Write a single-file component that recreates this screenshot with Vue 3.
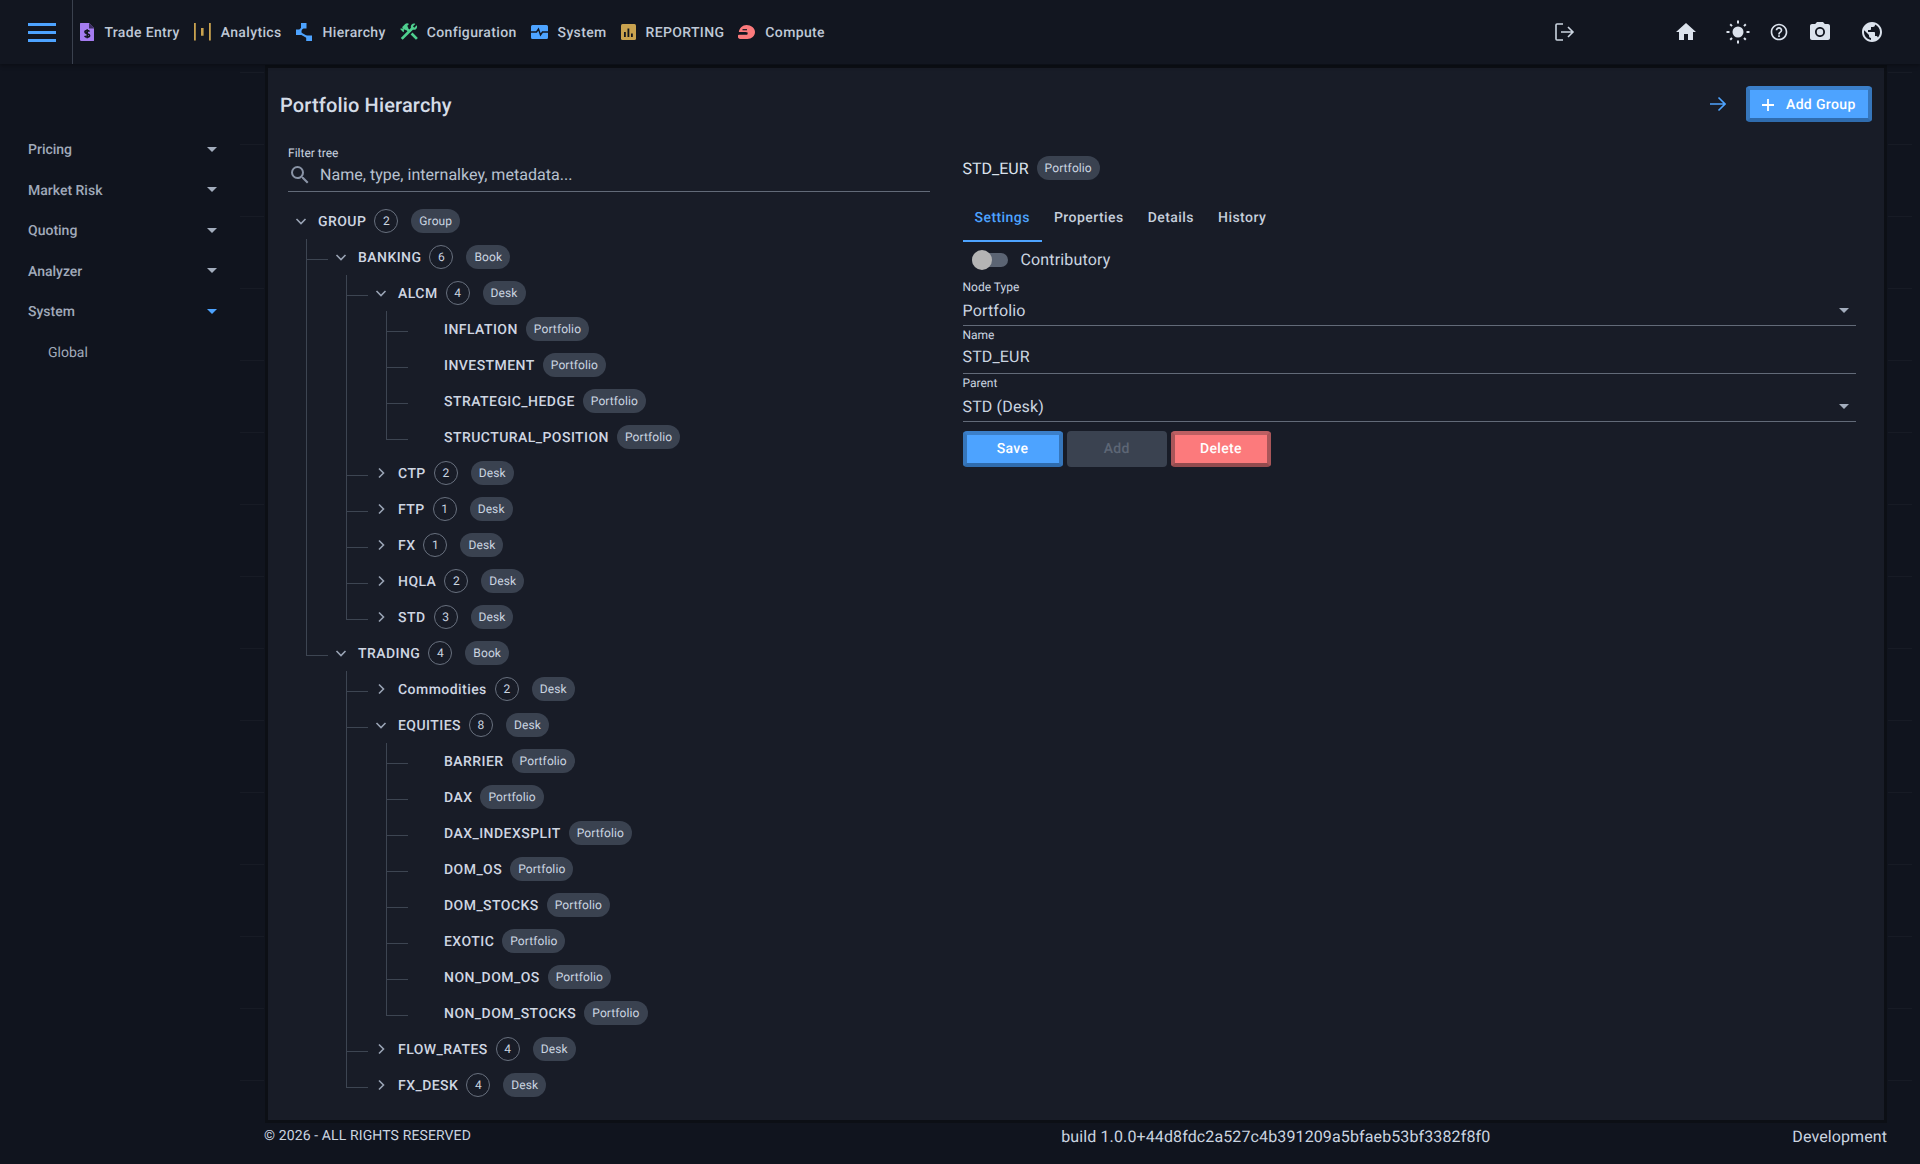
<script setup>
import { computed } from 'vue'

const navItems = [
  { label: 'Trade Entry', icon: 'trade' },
  { label: 'Analytics', icon: 'analytics' },
  { label: 'Hierarchy', icon: 'hierarchy' },
  { label: 'Configuration', icon: 'config' },
  { label: 'System', icon: 'system' },
  { label: 'REPORTING', icon: 'reporting' },
  { label: 'Compute', icon: 'compute' },
]

const sideItems = ['Pricing', 'Market Risk', 'Quoting', 'Analyzer', 'System']

const leaves = (names) => names.map((name) => ({ name, type: 'Portfolio' }))

const tree = {
  name: 'GROUP', count: 2, type: 'Group', open: true,
  children: [
    {
      name: 'BANKING', count: 6, type: 'Book', open: true,
      children: [
        {
          name: 'ALCM', count: 4, type: 'Desk', open: true,
          children: leaves(['INFLATION', 'INVESTMENT', 'STRATEGIC_HEDGE', 'STRUCTURAL_POSITION']),
        },
        { name: 'CTP', count: 2, type: 'Desk' },
        { name: 'FTP', count: 1, type: 'Desk' },
        { name: 'FX', count: 1, type: 'Desk' },
        { name: 'HQLA', count: 2, type: 'Desk' },
        { name: 'STD', count: 3, type: 'Desk' },
      ],
    },
    {
      name: 'TRADING', count: 4, type: 'Book', open: true,
      children: [
        { name: 'Commodities', count: 2, type: 'Desk' },
        {
          name: 'EQUITIES', count: 8, type: 'Desk', open: true,
          children: leaves(['BARRIER', 'DAX', 'DAX_INDEXSPLIT', 'DOM_OS', 'DOM_STOCKS', 'EXOTIC', 'NON_DOM_OS', 'NON_DOM_STOCKS']),
        },
        { name: 'FLOW_RATES', count: 4, type: 'Desk' },
        { name: 'FX_DESK', count: 4, type: 'Desk' },
      ],
    },
  ],
}

// flatten the tree, keeping track of which guide lines pass through each row
const rows = computed(() => {
  const out = []
  const walk = (node, depth, trail, isLast) => {
    out.push({ ...node, depth, trail, isLast })
    const kids = node.open ? node.children || [] : []
    kids.forEach((kid, i) => {
      const next = depth > 0 ? [...trail, { level: depth - 1, on: !isLast }] : trail
      walk(kid, depth + 1, next, i === kids.length - 1)
    })
  }
  walk(tree, 0, [], true)
  return out
})
</script>

<template>
  <div class="app">
    <header class="topbar">
      <button class="burger"><span></span><span></span><span></span></button>
      <nav class="nav">
        <a v-for="item in navItems" :key="item.label" class="nav-item">
          <svg v-if="item.icon === 'trade'" class="nav-icon" viewBox="4 2 16 20" width="14.400" height="18">
            <path fill="#a57cf0" d="M6 2h8l6 6v12.500A1.500 1.500 0 0 1 18.500 22h-13A1.500 1.500 0 0 1 4 20.500v-17A1.500 1.500 0 0 1 6 2z" />
            <path fill="#3d2f63" d="M14 2l6 6h-6z" />
            <path fill="none" stroke="#12161f" stroke-width="1.800" d="M14.500 11.500c-.5-.9-1.400-1.200-2.500-1.200-1.400 0-2.500.6-2.500 1.800 0 2.600 5.200 1.200 5.200 3.800 0 1.200-1.200 1.800-2.700 1.800-1.200 0-2.300-.5-2.800-1.400M12 9v10" />
          </svg>
          <svg v-else-if="item.icon === 'analytics'" class="nav-icon" viewBox="0 0 17 17.500" width="17" height="17.500">
            <path fill="#c9a24f" d="M0 0h1.800v17.500H0zM7 5h2.600v7.700H7zM15 0h1.800v17.500H15z" />
          </svg>
          <svg v-else-if="item.icon === 'hierarchy'" class="nav-icon nudge-right" viewBox="0 0 16 18" width="16" height="18">
            <path fill="none" stroke="#4da3ff" stroke-width="2" d="M8 3L2.500 9.200l10.500 6" />
            <path fill="#4da3ff" d="M5 0h5.500v5.500H5zM0 6.500h5.500V12H0zM10.200 12.500H16V18h-5.800z" />
          </svg>
          <svg v-else-if="item.icon === 'config'" class="nav-icon nudge-left" viewBox="2 2.500 20 19.500" width="18" height="17.500">
            <path fill="#4fd08f" d="M13.780 15.300L19.780 21.300L21.890 19.140L15.890 13.140L13.780 15.300M17.500 10.100C17.110 10.100 16.690 10.050 16.360 9.910L4.970 21.250L2.860 19.140L10.270 11.740L8.500 9.960L7.780 10.660L6.330 9.250V12.110L5.630 12.810L2.110 9.250L2.810 8.550H5.620L4.220 7.140L7.780 3.580C8.950 2.410 10.830 2.410 12 3.580L9.890 5.740L11.300 7.140L10.590 7.850L12.380 9.630L14.200 7.750C14.060 7.420 14 7 14 6.630C14 4.660 15.560 3.110 17.500 3.110C18.090 3.110 18.610 3.250 19.080 3.530L16.410 6.200L17.910 7.700L20.580 5.030C20.860 5.500 21 6 21 6.630C21 8.590 19.450 10.100 17.500 10.100Z" />
          </svg>
          <svg v-else-if="item.icon === 'system'" class="nav-icon" viewBox="0 0 17 14" width="17" height="14">
            <path fill="#4da3ff" d="M1.500 0h14A1.500 1.500 0 0 1 17 1.500v11a1.500 1.500 0 0 1-1.500 1.500h-14A1.500 1.500 0 0 1 0 12.500v-11A1.500 1.500 0 0 1 1.500 0z" />
            <path fill="none" stroke="#12161f" stroke-width="1.400" d="M0 7h5.500l2-3 2 6 2-3H17" />
          </svg>
          <svg v-else-if="item.icon === 'reporting'" class="nav-icon" viewBox="0 0 15 16" width="15" height="16">
            <rect width="15" height="16" rx="1.500" fill="#c9a24f" />
            <path fill="#12161f" d="M3 8h1.800v5H3zM6.500 4.500h1.800V13H6.500zM10 9.500h1.800V13H10z" />
          </svg>
          <svg v-else class="nav-icon" viewBox="0 0 17 14" width="17" height="14">
            <path fill="#fc7a7c" d="M8.500 0C13 0 17 3 17 7s-3.500 7-7.500 7H3c-1.500 0-3-.6-3-1.800v-1.500c0-.8.500-1 1.500-1h7c.8 0 1.200-.5 1-1C10.300 7.800 9.500 7 7.500 7H.8C1.500 3 4.500 0 8.500 0z" />
            <path fill="none" stroke="#12161f" stroke-width="1.200" d="M4.500 4.700h4.500" />
          </svg>
          <span class="nav-label">{{ item.label }}</span>
        </a>
      </nav>
      <div class="top-actions">
        <svg class="act-logout" viewBox="0 0 20 18" width="20" height="18" fill="none" stroke="#cbd5e0" stroke-width="1.600">
          <path d="M8 1H2a1 1 0 0 0-1 1v14a1 1 0 0 0 1 1h6M6 9h12M13 4l5 5-5 5" />
        </svg>
        <svg class="act-home" viewBox="0 0 24 24" width="24" height="24" fill="#dbe2ec">
          <path d="M10 20v-6h4v6h5v-8h3L12 3 2 12h3v8z" />
        </svg>
        <svg class="act-sun" viewBox="0 0 24 24" width="24" height="24" fill="#dbe2ec">
          <circle cx="12" cy="12" r="5.500" />
          <path d="M11 .5h2v3h-2zM11 20.500h2v3h-2zM.5 11h3v2h-3zM20.500 11h3v2h-3zM3.500 5l1.400-1.400 1.800 1.800-1.400 1.400zM17.300 18.700l1.400-1.400 1.800 1.800-1.400 1.400zM3.500 19.100l1.800-1.800 1.400 1.400-1.800 1.800zM17.300 5.400l1.800-1.800 1.400 1.400-1.800 1.800z" />
        </svg>
        <svg class="act-help" viewBox="0 0 24 24" width="20" height="20" fill="#dbe2ec">
          <path d="M11 18h2v-2h-2v2zm1-16C6.480 2 2 6.480 2 12s4.480 10 10 10 10-4.480 10-10S17.520 2 12 2zm0 18c-4.410 0-8-3.590-8-8s3.590-8 8-8 8 3.590 8 8-3.590 8-8 8zm0-14c-2.210 0-4 1.790-4 4h2c0-1.100.9-2 2-2s2 .9 2 2c0 2-3 1.750-3 5h2c0-2.250 3-2.500 3-5 0-2.210-1.790-4-4-4z" />
        </svg>
        <svg class="act-camera" viewBox="0 0 24 24" width="24" height="24" fill="#dbe2ec">
          <path d="M12 15.200a3.200 3.200 0 1 0 0-6.400 3.200 3.200 0 0 0 0 6.400z" />
          <path d="M9 2L7.170 4H4c-1.100 0-2 .9-2 2v12c0 1.100.9 2 2 2h16c1.100 0 2-.9 2-2V6c0-1.100-.9-2-2-2h-3.170L15 2H9zm3 15c-2.760 0-5-2.240-5-5s2.240-5 5-5 5 2.240 5 5-2.240 5-5 5z" />
        </svg>
        <svg class="act-globe" viewBox="0 0 24 24" width="24" height="24" fill="#dbe2ec">
          <path d="M12 2C6.480 2 2 6.480 2 12s4.480 10 10 10 10-4.480 10-10S17.520 2 12 2zm-1 17.930c-3.950-.49-7-3.850-7-7.930 0-.62.080-1.210.21-1.790L9 15v1c0 1.100.9 2 2 2v1.930zm6.900-2.540c-.26-.81-1-1.390-1.900-1.390h-1v-3c0-.55-.45-1-1-1H8v-2h2c.55 0 1-.45 1-1V7h2c1.100 0 2-.9 2-2v-.41c2.930 1.190 5 4.060 5 7.410 0 2.080-.8 3.970-2.100 5.390z" />
        </svg>
      </div>
    </header>

    <div class="body">
      <aside class="sidebar">
        <div v-for="item in sideItems" :key="item" class="side-item" :class="{ active: item === 'System' }">
          <span>{{ item }}</span>
          <i class="caret"></i>
        </div>
        <div class="side-sub">Global</div>
      </aside>

      <main class="panel">
        <div class="panel-head">
          <h1>Portfolio Hierarchy</h1>
          <div class="panel-tools">
            <svg viewBox="0 0 16 16" width="16" height="16" fill="none" stroke="#4da3ff" stroke-width="1.600">
              <path d="M0 8h15M8.500 1.500L15 8l-6.500 6.500" />
            </svg>
            <button class="btn btn-primary btn-add">
              <svg viewBox="0 0 12 12" width="12" height="12" fill="none" stroke="#fff" stroke-width="1.800"><path d="M6 0v12M0 6h12" /></svg>
              Add Group
            </button>
          </div>
        </div>

        <div class="columns">
          <section class="left">
            <label class="field-label">Filter tree</label>
            <div class="filter">
              <svg viewBox="0 0 24 24" width="24" height="24" fill="#8a94a6">
                <path d="M15.500 14h-.79l-.28-.27A6.470 6.470 0 0 0 16 9.500 6.500 6.500 0 1 0 9.500 16c1.610 0 3.090-.59 4.230-1.570l.27.28v.79l5 4.990L20.490 19l-4.990-5zm-6 0C7.010 14 5 11.990 5 9.500S7.010 5 9.500 5 14 7.010 14 9.500 11.990 14 9.500 14z" />
              </svg>
              <span>Name, type, internalkey, metadata...</span>
            </div>

            <div class="tree">
              <div
                v-for="row in rows"
                :key="row.name"
                class="row"
                :style="{ paddingLeft: row.depth * 40 + 'px' }"
              >
                <template v-for="t in row.trail" :key="t.level">
                  <i v-if="t.on" class="guide-v" :style="{ left: t.level * 40 + 17 + 'px' }"></i>
                </template>
                <template v-if="row.depth > 0">
                  <i
                    class="guide-v"
                    :class="{ 'guide-end': row.isLast }"
                    :style="{ left: (row.depth - 1) * 40 + 17 + 'px' }"
                  ></i>
                  <i class="guide-h" :style="{ left: (row.depth - 1) * 40 + 17 + 'px' }"></i>
                </template>

                <span v-if="row.count" class="toggle">
                  <svg viewBox="0 0 12 12" width="12" height="12" fill="none" stroke="#9aa4b5" stroke-width="1.600">
                    <path :d="row.open ? 'M1.500 4L6 8.500 10.500 4' : 'M4 1.500L8.500 6 4 10.500'" />
                  </svg>
                </span>
                <span v-else class="toggle-leaf"></span>

                <span class="node-name">{{ row.name }}</span>
                <span v-if="row.count" class="count">{{ row.count }}</span>
                <span class="chip">{{ row.type }}</span>
              </div>
            </div>
          </section>

          <section class="right">
            <div class="detail-head">
              <span>STD_EUR</span>
              <span class="chip">Portfolio</span>
            </div>
            <div class="tabs">
              <div class="tab active">Settings</div>
              <div class="tab">Properties</div>
              <div class="tab">Details</div>
              <div class="tab">History</div>
            </div>
            <div class="switch-row">
              <span class="switch"><i></i></span>
              <span>Contributory</span>
            </div>
            <div class="field field-select">
              <label>Node Type</label>
              <div class="field-value">Portfolio<i class="caret"></i></div>
            </div>
            <div class="field">
              <label>Name</label>
              <div class="field-value">STD_EUR</div>
            </div>
            <div class="field field-select">
              <label>Parent</label>
              <div class="field-value">STD (Desk)<i class="caret"></i></div>
            </div>
            <div class="actions">
              <button class="btn btn-primary">Save</button>
              <button class="btn btn-disabled">Add</button>
              <button class="btn btn-danger">Delete</button>
            </div>
          </section>
        </div>
      </main>
    </div>

    <footer class="footer">
      <span class="copy">© 2026 - ALL RIGHTS RESERVED</span>
      <span class="build">build 1.0.0+44d8fdc2a527c4b391209a5bfaeb53bf3382f8f0</span>
      <span class="env">Development</span>
    </footer>
  </div>
</template>

<style>
html, body {
  margin: 0;
  background: #10141e;
}
</style>

<style scoped>
.app {
  width: 1920px;
  height: 1164px;
  display: flex;
  flex-direction: column;
  background: #10141e;
  color: #cbd5e0;
  font-family: Roboto, "Liberation Sans", sans-serif;
  font-size: 14px;
  text-rendering: geometricPrecision;
  overflow: hidden;
}

.topbar {
  height: 64px;
  flex: none;
  position: relative;
  z-index: 1;
  display: flex;
  align-items: center;
  background: #121620;
  box-shadow: 0 2px 4px rgba(0, 0, 0, 0.3);
}

.burger {
  width: 28px;
  height: 64px;
  flex: none;
  padding: 0 16px 0 28px;
  background: none;
  border: 0;
  border-right: 1px solid #3a414e;
  display: flex;
  flex-direction: column;
  justify-content: center;
  gap: 5px;
  box-sizing: content-box;
}
.burger span {
  display: block;
  height: 3px;
  background: #4da3ff;
}

.nav {
  display: flex;
  align-items: center;
  gap: 14px;
  margin-left: 7px;
}
.nav-item {
  display: flex;
  align-items: center;
  gap: 10px;
  font-weight: 500;
  letter-spacing: 0.35px;
  color: #bfc8d6;
}
.nav-label {
  padding-top: 1px;
}
.nav-icon {
  flex: none;
}
.nudge-right { margin-right: 1px; }
.nudge-left { margin-right: -1px; }

.top-actions {
  margin-left: auto;
  display: flex;
  align-items: center;
  padding-right: 36px;
}
.act-logout { margin-right: 99px; }
.act-home { margin-right: 28px; }
.act-sun { margin-right: 19px; }
.act-help { margin-right: 19px; }
.act-camera { margin-right: 28px; }

.body {
  flex: 1;
  min-height: 0;
  display: flex;
  background-image:
    linear-gradient(to bottom, #171b25 1px, transparent 1px),
    linear-gradient(to bottom, #171b25 1px, transparent 1px);
  background-size: 24px 72px;
  background-position: 240px 8px, 1888px 8px;
  background-repeat: repeat-y;
}

.sidebar {
  width: 268px;
  flex: none;
  padding-top: 66px;
  box-sizing: border-box;
  color: #a0aaba;
  font-weight: 500;
}
.side-item {
  height: 40.500px;
  display: flex;
  align-items: center;
  justify-content: space-between;
  padding: 0 51px 0 28px;
}
.side-sub {
  height: 40.500px;
  display: flex;
  align-items: center;
  padding-left: 48px;
  font-weight: 400;
}
.caret {
  width: 0;
  height: 0;
  border-left: 5px solid transparent;
  border-right: 5px solid transparent;
  border-top: 5px solid #a3adbd;
}
.side-item .caret {
  margin-top: -2px;
}
.side-item.active .caret {
  border-top-color: #4da3ff;
}

.panel {
  width: 1616px;
  height: 1052px;
  margin-top: 4px;
  padding: 18px 12px 0;
  box-sizing: border-box;
  background: #181c27;
  box-shadow: 0 0 0 3px #0c0f15;
}

.panel-head {
  display: flex;
  align-items: center;
  justify-content: space-between;
  height: 36px;
}
.panel-head h1 {
  margin: 0;
  padding-top: 1px;
  font-size: 20px;
  font-weight: 500;
  letter-spacing: 0.15px;
  color: #d5dce7;
}
.panel-tools {
  display: flex;
  align-items: center;
  gap: 20px;
}

.btn {
  height: 36px;
  width: 100px;
  box-sizing: border-box;
  border-radius: 4px;
  border: 4px solid transparent;
  font-family: inherit;
  font-size: 14px;
  font-weight: 500;
  letter-spacing: 0.35px;
  color: #fff;
  text-rendering: inherit;
}
.btn-primary {
  background: #4da3ff;
  border-color: #3b7fc9 #3676bb #2f6cae;
}
.btn-danger {
  background: #fc7a7c;
  border-color: #bd5f62 #a95659 #934b4e;
}
.btn-disabled {
  background: #3a4250;
  border-color: #3a4250;
  color: #5d6675;
}
.btn-add {
  width: 126px;
  display: flex;
  align-items: center;
  gap: 12px;
  padding: 1px 0 0 12px;
}

.columns {
  display: grid;
  grid-template-columns: 642px 1fr;
  gap: 32.500px;
  padding: 24px 16px 0 8px;
}

.field-label {
  display: block;
  font-size: 12px;
  line-height: 14px;
  color: #cbd5e0;
}
.filter {
  height: 32px;
  display: flex;
  align-items: center;
  gap: 8px;
  padding: 0 0 2px;
  box-sizing: border-box;
  border-bottom: 1px solid #626a78;
  font-size: 16px;
  letter-spacing: 0.03px;
  color: #b8c2d0;
}

.tree {
  margin-top: 11px;
  padding-left: 1px;
}
.row {
  position: relative;
  height: 36px;
  display: flex;
  align-items: center;
  white-space: nowrap;
}
.guide-v {
  position: absolute;
  top: 0;
  bottom: 0;
  width: 1px;
  background: #3d4552;
}
.guide-end {
  bottom: 16px;
}
.guide-h {
  position: absolute;
  top: 20px;
  width: 22px;
  height: 1px;
  background: #3d4552;
}
.toggle {
  width: 24px;
  flex: none;
  display: flex;
  justify-content: center;
  margin-right: 5px;
}
.toggle-leaf {
  width: 35px;
  flex: none;
}
.node-name {
  padding-top: 1px;
  font-size: 14px;
  font-weight: 500;
  letter-spacing: 0.45px;
  color: #cfd6e2;
}
.count {
  width: 24px;
  height: 24px;
  margin-left: 8px;
  flex: none;
  box-sizing: border-box;
  border: 1px solid #68707e;
  border-radius: 50%;
  display: flex;
  align-items: center;
  justify-content: center;
  font-size: 12px;
  color: #cbd5e0;
}
.chip {
  height: 24px;
  margin-left: 8px;
  padding: 0 8px;
  display: inline-flex;
  align-items: center;
  border-radius: 12px;
  background: #3a4250;
  font-size: 12px;
  letter-spacing: 0.1px;
  color: #cbd5e0;
}
.count + .chip {
  margin-left: 13px;
}

.detail-head {
  display: flex;
  align-items: center;
  height: 24px;
  margin-top: 10px;
  font-size: 16px;
  color: #dbe2ec;
}

.tabs {
  display: flex;
  margin-top: 14px;
}
.tab {
  height: 48px;
  padding: 2px 12px 0;
  box-sizing: border-box;
  display: flex;
  align-items: center;
  font-weight: 500;
  letter-spacing: 0.45px;
  color: #c5cedb;
  border-bottom: 2px solid transparent;
}
.tab.active {
  color: #4da3ff;
  border-bottom-color: #4da3ff;
}

.switch-row {
  height: 36px;
  display: flex;
  align-items: center;
  gap: 13px;
  padding-left: 9px;
  padding-bottom: 1px;
  box-sizing: border-box;
  font-size: 16px;
  letter-spacing: 0.15px;
  color: #cbd5e0;
}
.switch {
  position: relative;
  width: 36px;
  height: 14px;
  border-radius: 7px;
  background: #5b6473;
}
.switch i {
  position: absolute;
  left: 0;
  top: -3px;
  width: 20px;
  height: 20px;
  border-radius: 50%;
  background: #b4b4b4;
}

.field label {
  display: block;
  font-size: 12px;
  line-height: 14px;
  color: #cbd5e0;
}
.field {
  padding-top: 2px;
}
.field-value {
  display: flex;
  align-items: center;
  justify-content: space-between;
  height: 29px;
  padding-bottom: 2px;
  font-size: 16px;
  letter-spacing: 0.15px;
  color: #cbd5e0;
  border-bottom: 1px solid #626a78;
}
.field-select .field-value {
  height: 29px;
  padding-top: 2px;
  padding-bottom: 0;
}
.field-value .caret {
  margin-right: 7px;
}

.actions {
  display: flex;
  gap: 4.200px;
  margin-top: 9px;
}

.footer {
  flex: none;
  height: 44px;
  box-sizing: border-box;
  display: flex;
  align-items: center;
  padding: 0 33px 12px 264px;
  color: #cbd5e0;
}
.copy {
  font-size: 14px;
  letter-spacing: 0.12px;
}
.build {
  margin-left: auto;
  margin-right: 302px;
  font-size: 16px;
  letter-spacing: 0.12px;
}
.env {
  font-size: 16px;
  letter-spacing: 0.1px;
}
</style>
